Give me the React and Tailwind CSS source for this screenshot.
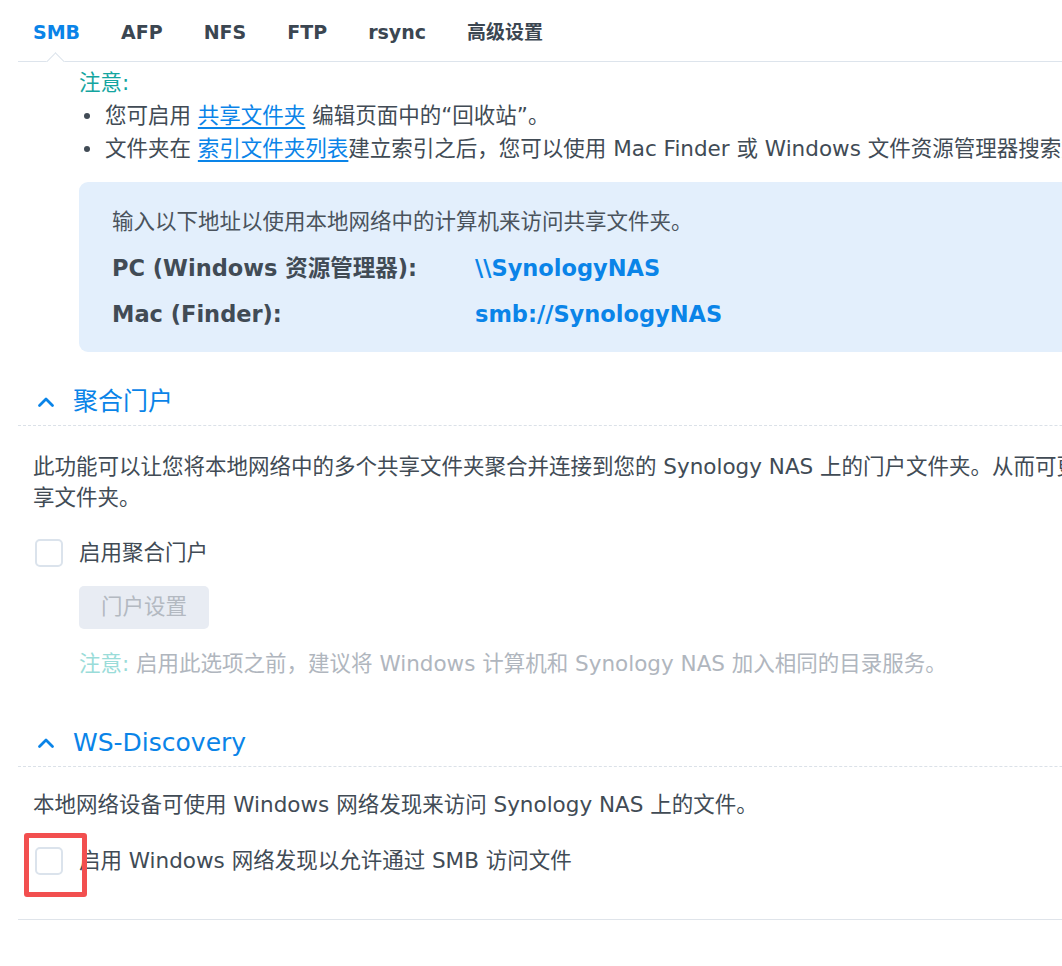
const FONT = { fontFamily: '"DejaVu Sans", "Noto Sans CJK SC", sans-serif' };

const Chevron = () => (
  <svg width="18" height="12" viewBox="0 0 18 12" className="mr-[18px]">
    <path d="M2.5 9.5 L9 3 L15.5 9.5" fill="none" stroke="#0a84e8" strokeWidth="2.8" strokeLinecap="round" strokeLinejoin="round" />
  </svg>
);

const Checkbox = () => (
  <span className="w-[28px] h-[28px] rounded-[5px] border-2 border-[#dbe3ec] bg-white shrink-0" />
);

const SectionHeader = ({ title, className }) => (
  <div className={`flex items-center h-[48px] pl-[19px] border-b border-dashed border-[#dbe1e8] ${className}`}>
    <Chevron />
    <span className="text-[25px] text-[#0a84e8] leading-none">{title}</span>
  </div>
);

export default function App() {
  const tabs = ["SMB", "AFP", "NFS", "FTP", "rsync", "高级设置"];

  return (
    <div className="relative w-[1062px] h-[966px] overflow-hidden bg-white text-[#414b55]" style={FONT}>
      <div className="w-[1400px] ml-[18px]">

        {/* TABS */}
        <div className="relative flex items-center gap-[41px] h-[62px] pl-[15px] pt-[3px] border-b border-[#dde4ec]">
          {tabs.map((t, i) => (
            <span
              key={t}
              className={`text-[19px] font-bold leading-none ${i === 0 ? "text-[#0a84e8]" : "text-[#3b4651]"}`}
            >
              {t}
            </span>
          ))}
          <span className="absolute left-[31px] bottom-[-7px] w-[13px] h-[13px] bg-white border-l border-t border-[#dde4ec] rotate-45" />
        </div>

        {/* NOTES */}
        <div className="pl-[61px] mt-[4px] text-[21.5px] leading-[33px]">
          <div className="text-[#14a5a0]">注意:</div>
          <div className="flex items-center whitespace-nowrap">
            <span className="w-[6px] h-[6px] rounded-full bg-[#414b55] ml-[5px] mr-[15px]" />
            <span>
              您可启用 <span className="text-[#0a84e8] underline underline-offset-4">共享文件夹</span> 编辑页面中的“回收站”。
            </span>
          </div>
          <div className="flex items-center whitespace-nowrap">
            <span className="w-[6px] h-[6px] rounded-full bg-[#414b55] ml-[5px] mr-[15px]" />
            <span>
              文件夹在 <span className="text-[#0a84e8] underline underline-offset-4">索引文件夹列表</span>建立索引之后，您可以使用 Mac Finder 或 Windows 文件资源管理器搜索文件。
            </span>
          </div>
        </div>

        {/* ADDRESS BOX */}
        <div className="ml-[61px] mt-[17px] rounded-[9px] bg-[#e3effc] pl-[33px] pt-[24px] pb-[22px] flex flex-col gap-[14px] text-[21.5px] leading-[32px]">
          <div className="text-[#4a535c]">输入以下地址以使用本地网络中的计算机来访问共享文件夹。</div>
          <div className="flex font-bold text-[22.5px]">
            <span className="w-[363px]">PC (Windows 资源管理器):</span>
            <span className="text-[#0a84e8]">\\SynologyNAS</span>
          </div>
          <div className="flex font-bold text-[22.5px]">
            <span className="w-[363px]">Mac (Finder):</span>
            <span className="text-[#0a84e8]">smb://SynologyNAS</span>
          </div>
        </div>

        {/* AGGREGATION PORTAL */}
        <SectionHeader title="聚合门户" className="mt-[26px]" />

        <div className="pl-[15px] mt-[25px] text-[21.5px] leading-[31px] whitespace-nowrap">
          此功能可以让您将本地网络中的多个共享文件夹聚合并连接到您的 Synology NAS 上的门户文件夹。从而可更方便地访问这些共
          <br />
          享文件夹。
        </div>

        <div className="flex items-center h-[32px] mt-[24px] pl-[17px] text-[21.5px]">
          <Checkbox />
          <span className="ml-[16px]">启用聚合门户</span>
        </div>

        <div className="pl-[61px] mt-[17px]">
          <div className="w-[130px] h-[43px] rounded-[5px] bg-[#e8ecf3] flex items-center justify-center text-[21.5px] text-[#b3b9c1]">
            门户设置
          </div>
        </div>

        <div className="pl-[61px] mt-[19px] text-[21.5px] leading-[32px] text-[#b0b6be] whitespace-nowrap">
          <span className="text-[#9adcd9]">注意:</span> 启用此选项之前，建议将 Windows 计算机和 Synology NAS 加入相同的目录服务。
        </div>

        {/* WS-DISCOVERY */}
        <SectionHeader title="WS-Discovery" className="mt-[39px]" />

        <div className="pl-[15px] mt-[22px] text-[21.5px] leading-[32px] whitespace-nowrap">
          本地网络设备可使用 Windows 网络发现来访问 Synology NAS 上的文件。
        </div>

        <div className="border-b border-[#dfe4ea] pb-[42px]">
          <div className="flex items-center h-[32px] mt-[24px] pl-[17px] text-[21.5px]">
            <Checkbox />
            <span className="ml-[16px]">启用 Windows 网络发现以允许通过 SMB 访问文件</span>
          </div>
        </div>
      </div>

      {/* ANNOTATION */}
      <div className="absolute left-[24px] top-[833px] w-[63px] h-[64px] border-[5px] border-[#f24f4f] rounded-[3px]" />
    </div>
  );
}
